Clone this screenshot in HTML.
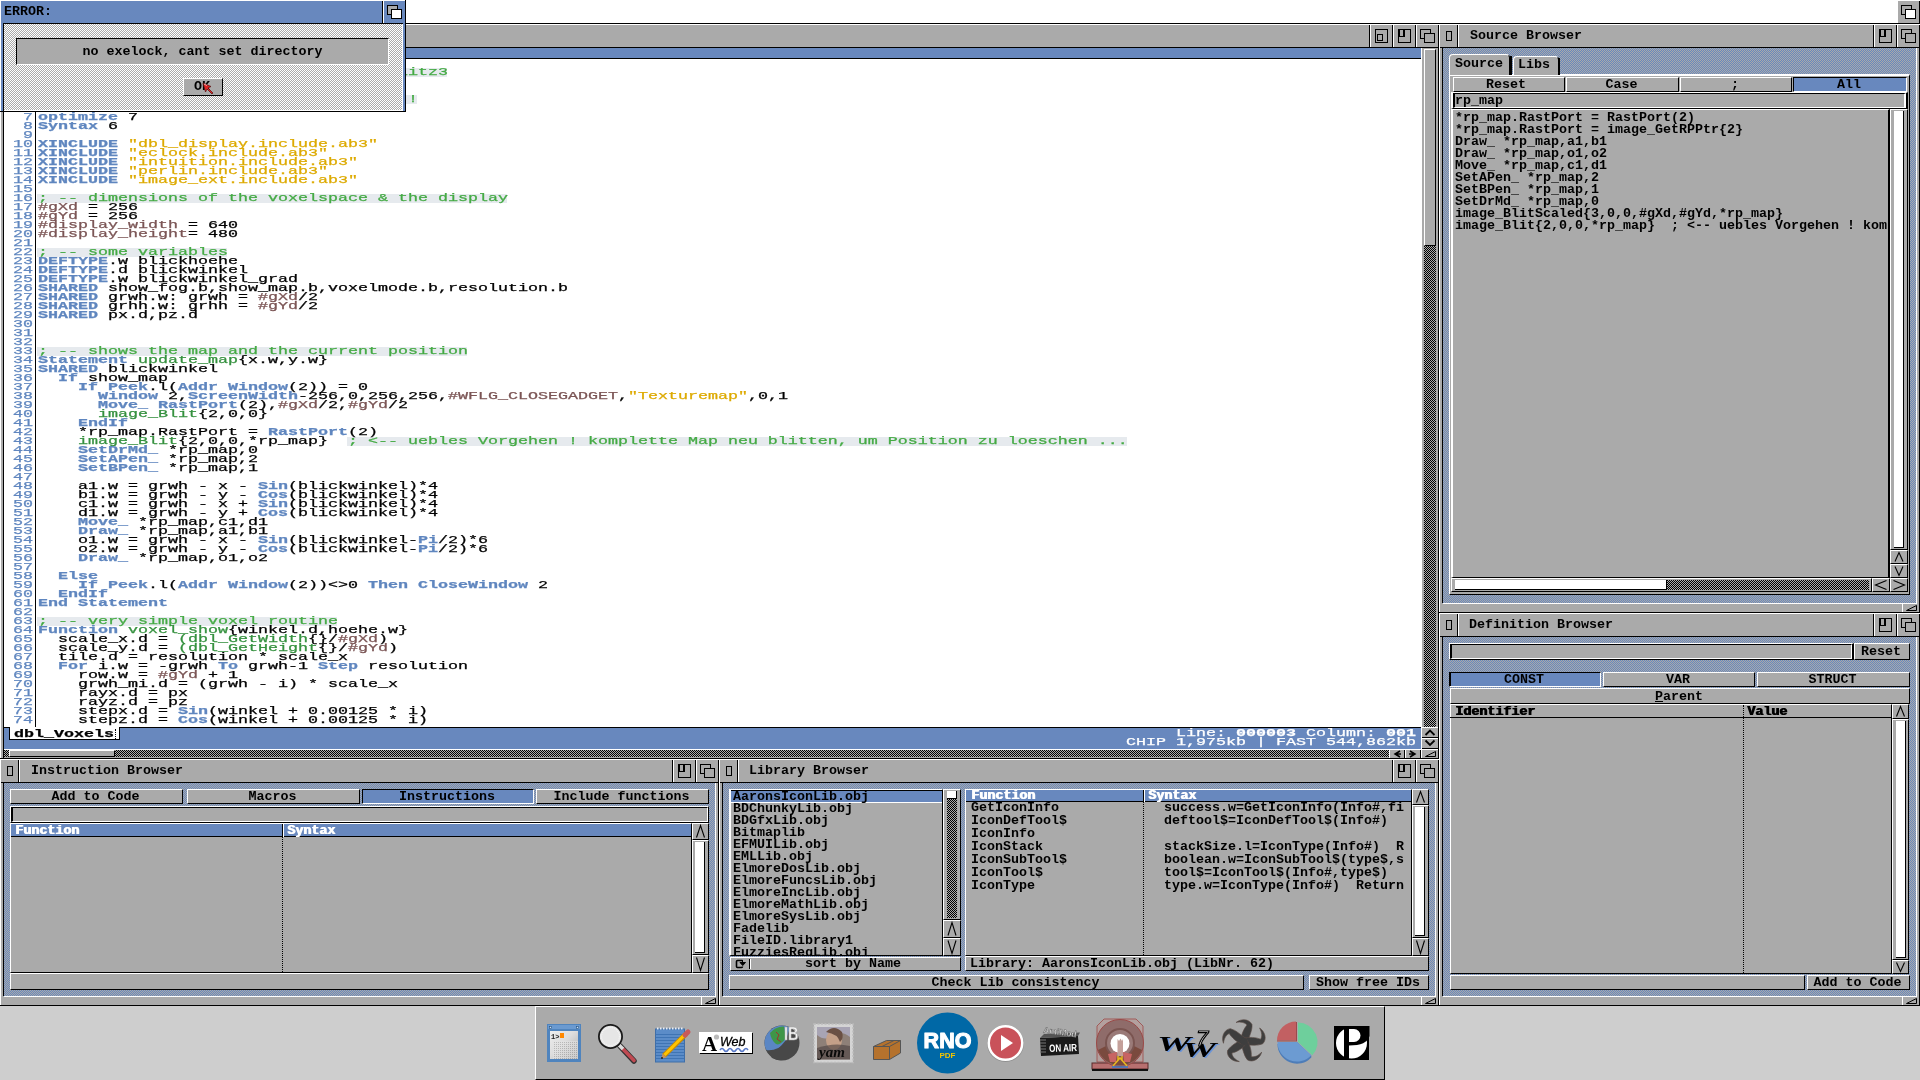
<!DOCTYPE html>
<html lang="en"><head><meta charset="utf-8"><title>AmiBlitz3</title>
<style>
html,body{margin:0;padding:0}
body{width:1920px;height:1080px;overflow:hidden;background:#cecece;position:relative;font-family:"Liberation Mono",monospace;font-size:13.333px;line-height:13px;color:#000}
div{box-sizing:border-box}
.a{position:absolute}
.t{white-space:pre;height:13px;font-weight:bold}
.g{background:#aaa}
.b{background:#6888be}
.k{background:#000}
.w{background:#fff}
.dz{background:repeating-conic-gradient(#aaa 0 25%,#6888be 0 50%) 0 0/2px 2px}
.dw{background:repeating-conic-gradient(#aaa 0 25%,#fff 0 50%) 0 0/2px 2px}
.dk{background:repeating-conic-gradient(#aaa 0 25%,#000 0 50%) 0 0/2px 2px}
.up{background:#aaa;border:1px solid;border-color:#fff #000 #000 #fff}
.dn{background:#aaa;border:1px solid;border-color:#000 #fff #fff #000}
.sel{background:#6888be;border:1px solid;border-color:#000 #fff #fff #000}
svg{position:absolute;overflow:visible}
.ed{-webkit-text-stroke:0.25px;font-size:10.63px;line-height:9px;white-space:pre;transform:scaleX(1.568);transform-origin:0 0;margin:0;font-family:"Liberation Mono",monospace}
.ed b{color:#5f86bf}
.ed i{font-style:normal;color:#35913f}
.ed u{text-decoration:none;color:#7b5555}
.ed s{text-decoration:none;color:#ddaa00}
.ed em{font-style:normal;color:#44aa44}
.hb{text-shadow:1px 0 0 currentColor}
#scr{position:absolute;left:0;top:0;width:1920px;height:1080px;will-change:transform}

</style></head>
<body>
<div id="scr">
<div class="a w" style="left:0px;top:0px;width:1920px;height:23px;"></div>
<div class="a" style="left:0px;top:23px;width:1920px;height:1px;background:#000"></div>
<div class="a g" style="left:1898px;top:1px;width:21px;height:22px;"></div>
<div class="a" style="left:1919px;top:1px;width:1px;height:22px;background:#000"></div>
<div class="a" style="left:1901px;top:5px;width:11px;height:10px;border:1px solid #000;background:#aaa"></div>
<div class="a" style="left:1905px;top:9px;width:11px;height:10px;border:1px solid #000;background:#fff"></div>
<div class="a g" style="left:0px;top:24px;width:1439px;height:735px;"></div>
<div class="a" style="left:0px;top:24px;width:1439px;height:1px;background:#fff"></div>
<div class="a" style="left:0px;top:24px;width:1px;height:735px;background:#fff"></div>
<div class="a" style="left:0px;top:758px;width:1439px;height:1px;background:#000"></div>
<div class="a" style="left:1438px;top:25px;width:1px;height:734px;background:#000"></div>
<div class="a" style="left:1px;top:47px;width:1438px;height:1px;background:#000"></div>
<div class="a" style="left:3px;top:48px;width:1px;height:710px;background:#000"></div>
<div class="a" style="left:1369px;top:25px;width:1px;height:22px;background:#000"></div>
<div class="a" style="left:1370px;top:25px;width:1px;height:22px;background:#fff"></div>
<div class="a" style="left:1375px;top:29px;width:13px;height:14px;border:1px solid #000;background:#aaa"></div>
<div class="a" style="left:1377px;top:34px;width:6px;height:7px;border:1px solid #000;background:#aaa"></div>
<div class="a" style="left:1392px;top:25px;width:1px;height:22px;background:#000"></div>
<div class="a" style="left:1393px;top:25px;width:1px;height:22px;background:#fff"></div>
<div class="a" style="left:1398px;top:29px;width:13px;height:14px;border:1px solid #000;background:#aaa"></div>
<div class="a" style="left:1398px;top:29px;width:7px;height:8px;border:solid #000;border-width:1px 2px 1px 2px;background:#aaa"></div>
<div class="a" style="left:1415px;top:25px;width:1px;height:22px;background:#000"></div>
<div class="a" style="left:1416px;top:25px;width:1px;height:22px;background:#fff"></div>
<div class="a" style="left:1420px;top:29px;width:11px;height:10px;border:1px solid #000;background:#aaa"></div>
<div class="a" style="left:1424px;top:33px;width:11px;height:10px;border:1px solid #000;background:#aaa"></div>
<div class="a b" style="left:4px;top:48px;width:1417px;height:10px;"></div>
<div class="a" style="left:4px;top:58px;width:1417px;height:1px;background:#000"></div>
<div class="a w" style="left:4px;top:59px;width:1418px;height:668px;"></div>
<div class="a" style="left:4px;top:727px;width:6px;height:1px;background:#000"></div>
<div class="a" style="left:119px;top:727px;width:1302px;height:1px;background:#000"></div>
<div class="a b" style="left:4px;top:728px;width:1417px;height:21px;"></div>
<div class="a" style="left:1421px;top:48px;width:1px;height:702px;background:#fff"></div>
<div class="a" style="left:1424px;top:49px;width:12px;height:197px;background:#aaa;border-left:1px solid #fff;border-top:1px solid #fff;border-right:1px solid #000;border-bottom:1px solid #000"></div>
<div class="a dk" style="left:1424px;top:246px;width:12px;height:481px;"></div>
<div class="a" style="left:1422px;top:727px;width:16px;height:1px;background:#fff"></div>
<div class="a" style="left:1422px;top:737px;width:16px;height:1px;background:#000"></div>
<div class="a" style="left:1422px;top:738px;width:16px;height:1px;background:#fff"></div>
<div class="a" style="left:1422px;top:748px;width:16px;height:1px;background:#000"></div>
<div class="a" style="left:1422px;top:749px;width:16px;height:1px;background:#fff"></div>
<svg style="left:1422px;top:728px" width="16" height="30"><path d="M3.5 7 L8 2.5 L12.5 7 M3.5 12.5 L8 17 L12.5 12.5" fill="none" stroke="#000" stroke-width="1.8"/><path d="M3.500 28.500 L13.500 23.500 L13.500 28.500 Z" fill="none" stroke="#000" stroke-width="1"/></svg>
<div class="a" style="left:4px;top:749px;width:1418px;height:1px;background:#fff"></div>
<div class="a dk" style="left:4px;top:750px;width:1385px;height:7px;"></div>
<div class="a up" style="left:9px;top:750px;width:106px;height:7px;"></div>
<div class="a" style="left:1389px;top:750px;width:1px;height:8px;background:#fff"></div>
<div class="a" style="left:1404px;top:750px;width:1px;height:8px;background:#000"></div>
<div class="a" style="left:1405px;top:750px;width:1px;height:8px;background:#fff"></div>
<div class="a" style="left:1420px;top:750px;width:1px;height:8px;background:#000"></div>
<div class="a" style="left:1421px;top:750px;width:1px;height:8px;background:#fff"></div>
<svg style="left:1390px;top:750px" width="30" height="8"><path d="M10 1 L5 4 L10 7 M5 4 L11 4 M20 1 L25 4 L20 7 M19 4 L25 4" fill="none" stroke="#000" stroke-width="1.5"/></svg>
<div class="a" style="left:9px;top:727px;width:111px;height:13px;background:#fff;border:1px solid #000;border-top:none"></div>
<div class="a" style="left:115px;top:729px;width:0;height:10px;border-left:1px dotted #000"></div>
<div class="a" style="left:35px;top:59px;width:1px;height:668px;background:#000"></div>
<div class="a" style="left:37px;top:68px;width:410px;height:9px;background:#e6eaee"></div><div class="a" style="left:37px;top:95px;width:380px;height:9px;background:#e6eaee"></div><div class="a" style="left:37px;top:194px;width:470px;height:9px;background:#e6eaee"></div><div class="a" style="left:37px;top:248px;width:190px;height:9px;background:#e6eaee"></div><div class="a" style="left:37px;top:347px;width:430px;height:9px;background:#e6eaee"></div><div class="a" style="left:347px;top:437px;width:780px;height:9px;background:#e6eaee"></div><div class="a" style="left:37px;top:617px;width:300px;height:9px;background:#e6eaee"></div>
<pre class="a ed" style="left:3px;top:59px;width:19.133px;text-align:right;color:#5f86bf">1
2
3
4
5
6
7
8
9
10
11
12
13
14
15
16
17
18
19
20
21
22
23
24
25
26
27
28
29
30
31
32
33
34
35
36
37
38
39
40
41
42
43
44
45
46
47
48
49
50
51
52
53
54
55
56
57
58
59
60
61
62
63
64
65
66
67
68
69
70
71
72
73
74</pre>
<pre class="a ed" style="left:37.500px;top:59px">

<em>; -- simple voxelspace demo for AmiBlitz3</em>


<em>; -- use cursor keys to move around  !</em>

<b>optimize</b> 7
<b>Syntax</b> 6

<b>XINCLUDE</b> <s>"dbl_display.include.ab3"</s>
<b>XINCLUDE</b> <s>"eclock.include.ab3"</s>
<b>XINCLUDE</b> <s>"intuition.include.ab3"</s>
<b>XINCLUDE</b> <s>"perlin.include.ab3"</s>
<b>XINCLUDE</b> <s>"image_ext.include.ab3"</s>

<em>; -- dimensions of the voxelspace &amp; the display</em>
<u>#gXd</u> = 256
<u>#gYd</u> = 256
<u>#display_width</u> = 640
<u>#display_height</u>= 480

<em>; -- some variables</em>
<b>DEFTYPE</b>.w blickhoehe
<b>DEFTYPE</b>.d blickwinkel
<b>DEFTYPE</b>.w blickwinkel_grad
<b>SHARED</b> show_fog.b,show_map.b,voxelmode.b,resolution.b
<b>SHARED</b> grwh.w: grwh = <u>#gXd</u>/2
<b>SHARED</b> grhh.w: grhh = <u>#gYd</u>/2
<b>SHARED</b> px.d,pz.d



<em>; -- shows the map and the current position</em>
<b>Statement</b> <i>update_map</i>{x.w,y.w}
<b>SHARED</b> blickwinkel
  <b>If</b> show_map
    <b>If</b> <b>Peek</b>.l(<b>Addr</b> <b>Window</b>(2)) = 0
      <b>Window</b> 2,<b>ScreenWidth</b>-256,0,256,256,<u>#WFLG_CLOSEGADGET</u>,<s>"Texturemap"</s>,0,1
      <b>Move_</b> <b>RastPort</b>(2),<u>#gXd</u>/2,<u>#gYd</u>/2
      <i>image_Blit</i>{2,0,0}
    <b>EndIf</b>
    *rp_map.RastPort = <b>RastPort</b>(2)
    <i>image_Blit</i>{2,0,0,*rp_map}  <em>; &lt;-- uebles Vorgehen ! komplette Map neu blitten, um Position zu loeschen ...</em>
    <b>SetDrMd_</b> *rp_map,0
    <b>SetAPen_</b> *rp_map,2
    <b>SetBPen_</b> *rp_map,1

    a1.w = grwh - x - <b>Sin</b>(blickwinkel)*4
    b1.w = grwh - y - <b>Cos</b>(blickwinkel)*4
    c1.w = grwh - x + <b>Sin</b>(blickwinkel)*4
    d1.w = grwh - y + <b>Cos</b>(blickwinkel)*4
    <b>Move_</b> *rp_map,c1,d1
    <b>Draw_</b> *rp_map,a1,b1
    o1.w = grwh - x - <b>Sin</b>(blickwinkel-<b>Pi</b>/2)*6
    o2.w = grwh - y - <b>Cos</b>(blickwinkel-<b>Pi</b>/2)*6
    <b>Draw_</b> *rp_map,o1,o2

  <b>Else</b>
    <b>If</b> <b>Peek</b>.l(<b>Addr</b> <b>Window</b>(2))&lt;&gt;0 <b>Then</b> <b>CloseWindow</b> 2
  <b>EndIf</b>
<b>End</b> <b>Statement</b>

<em>; -- very simple voxel routine</em>
<b>Function</b> <i>voxel_show</i>{winkel.d,hoehe.w}
  scale_x.d = <i>(dbl_GetWidth</i>{}/<u>#gXd</u>)
  scale_y.d = <i>(dbl_GetHeight</i>{}/<u>#gYd</u>)
  tile.d = resolution * scale_x
  <b>For</b> i.w = -grwh <b>To</b> grwh-1 <b>Step</b> resolution
    row.w = <u>#gYd</u> + 1
    grwh_mi.d = (grwh - i) * scale_x
    rayx.d = px
    rayz.d = pz
    stepx.d = <b>Sin</b>(winkel + 0.00125 * i)
    stepz.d = <b>Cos</b>(winkel + 0.00125 * i)</pre>
<pre class="a ed" style="left:14px;top:730px;font-weight:bold">dbl_Voxels</pre>
<pre class="a ed" style="left:1126px;top:729px;color:#fff;width:184.949px;text-align:right">Line: <b style="color:#fff">000003</b> Column: <b style="color:#fff">001</b>
CHIP 1,975kb | FAST 544,862kb</pre>
<div class="a g" style="left:1439px;top:24px;width:481px;height:589px;"></div>
<div class="a" style="left:1439px;top:24px;width:481px;height:1px;background:#fff"></div>
<div class="a" style="left:1439px;top:24px;width:1px;height:589px;background:#fff"></div>
<div class="a" style="left:1439px;top:612px;width:481px;height:1px;background:#000"></div>
<div class="a" style="left:1919px;top:25px;width:1px;height:588px;background:#000"></div>
<div class="a" style="left:1440px;top:47px;width:480px;height:1px;background:#000"></div>
<div class="a dz" style="left:1443px;top:48px;width:473px;height:555px;"></div>
<div class="a" style="left:1442px;top:48px;width:1px;height:555px;background:#000"></div>
<div class="a" style="left:1916px;top:48px;width:1px;height:555px;background:#fff"></div>
<div class="a" style="left:1443px;top:603px;width:474px;height:1px;background:#fff"></div>
<div class="a" style="left:1446px;top:31px;width:6px;height:10px;border:1px solid #000;background:#aaa"></div>
<div class="a" style="left:1457px;top:25px;width:1px;height:22px;background:#000"></div>
<div class="a" style="left:1458px;top:25px;width:1px;height:22px;background:#fff"></div>
<div class="a" style="left:1896px;top:25px;width:1px;height:22px;background:#000"></div>
<div class="a" style="left:1897px;top:25px;width:1px;height:22px;background:#fff"></div>
<div class="a" style="left:1901px;top:29px;width:11px;height:10px;border:1px solid #000;background:#aaa"></div>
<div class="a" style="left:1905px;top:33px;width:11px;height:10px;border:1px solid #000;background:#aaa"></div>
<div class="a" style="left:1873px;top:25px;width:1px;height:22px;background:#000"></div>
<div class="a" style="left:1874px;top:25px;width:1px;height:22px;background:#fff"></div>
<div class="a" style="left:1879px;top:29px;width:13px;height:14px;border:1px solid #000;background:#aaa"></div>
<div class="a" style="left:1879px;top:29px;width:7px;height:8px;border:solid #000;border-width:1px 2px 1px 2px;background:#aaa"></div>
<div class="a t" style="left:1470px;top:29px;">Source Browser</div>
<div class="a" style="left:1902px;top:604px;width:1px;height:8px;background:#fff"></div>
<svg style="left:1905px;top:604px" width="14" height="8"><path d="M1.5 6.500 L11.500 1.500 L11.500 6.500 Z" fill="none" stroke="#000" stroke-width="1"/></svg>
<div class="a g" style="left:1449px;top:74px;width:461px;height:521px;border:solid;border-width:2px 1px 1px 1px;border-color:#fff #000 #000 #fff"></div>
<div class="a g" style="left:1449px;top:54px;width:61px;height:21px;border:1px solid;border-color:#fff #000 #aaa #fff;border-radius:4px 4px 0 0;border-bottom:none"></div>
<div class="a k" style="left:1510px;top:56px;width:2px;height:19px;"></div>
<div class="a g" style="left:1513px;top:56px;width:46px;height:19px;border:1px solid;border-color:#fff #000 #aaa #fff;border-radius:4px 4px 0 0;border-bottom:none"></div>
<div class="a k" style="left:1558px;top:58px;width:2px;height:17px;"></div>
<div class="a t" style="left:1455px;top:57px;">Source</div>
<div class="a t" style="left:1518px;top:58px;">Libs</div>
<div class="a up" style="left:1453px;top:77px;width:112px;height:15px;"></div>
<div class="a t" style="left:1486px;top:78px;">Reset</div>
<div class="a up" style="left:1566px;top:77px;width:113px;height:15px;"></div>
<div class="a t" style="left:1565px;width:113px;text-align:center;top:78px;">Case</div>
<div class="a up" style="left:1680px;top:77px;width:112px;height:15px;"></div>
<div class="a t" style="left:1679px;width:112px;text-align:center;top:78px;">;</div>
<div class="a sel" style="left:1793px;top:77px;width:114px;height:15px;"></div>
<div class="a t" style="left:1792px;width:114px;text-align:center;top:78px;">All</div>
<div class="a g" style="left:1451px;top:92px;width:457px;height:17px;border:solid;border-width:1px 2px 1px 2px;border-color:#fff #000 #000 #fff"></div>
<div class="a g" style="left:1453px;top:93px;width:453px;height:15px;border:solid;border-width:1px 2px 1px 2px;border-color:#000 #fff #fff #000"></div>
<div class="a t" style="left:1455px;top:94px;">rp_map</div>
<div class="a g" style="left:1451px;top:109px;width:439px;height:469px;border:solid;border-width:1px 2px 1px 2px;border-color:#fff #000 #000 #fff"></div>
<div class="a t" style="left:1455px;top:111px;">*rp_map.RastPort = RastPort(2)</div>
<div class="a t" style="left:1455px;top:123px;">*rp_map.RastPort = image_GetRPPtr{2}</div>
<div class="a t" style="left:1455px;top:135px;">Draw_ *rp_map,a1,b1</div>
<div class="a t" style="left:1455px;top:147px;">Draw_ *rp_map,o1,o2</div>
<div class="a t" style="left:1455px;top:159px;">Move_ *rp_map,c1,d1</div>
<div class="a t" style="left:1455px;top:171px;">SetAPen_ *rp_map,2</div>
<div class="a t" style="left:1455px;top:183px;">SetBPen_ *rp_map,1</div>
<div class="a t" style="left:1455px;top:195px;">SetDrMd_ *rp_map,0</div>
<div class="a t" style="left:1455px;top:207px;">image_BlitScaled{3,0,0,#gXd,#gYd,*rp_map}</div>
<div class="a t" style="left:1455px;top:219px;">image_Blit{2,0,0,*rp_map}  ; &lt;-- uebles Vorgehen ! kom</div>
<div class="a g" style="left:1890px;top:109px;width:18px;height:441px;border:1px solid;border-color:#fff #000 #000 #fff"></div>
<div class="a dk" style="left:1894px;top:111px;width:10px;height:437px;"></div>
<div class="a w" style="left:1894px;top:111px;width:10px;height:437px;border-right:1px solid #000;border-bottom:1px solid #000"></div>
<div class="a up" style="left:1890px;top:550px;width:18px;height:14px;"></div>
<svg style="left:1890px;top:550px" width="18" height="14"><path d="M5.0 11.5 L9.0 2.5 L13.0 11.5" fill="none" stroke="#000" stroke-width="1.1"/></svg>
<div class="a up" style="left:1890px;top:564px;width:18px;height:14px;"></div>
<svg style="left:1890px;top:564px" width="18" height="14"><path d="M5.0 2.5 L9.0 11.5 L13.0 2.5" fill="none" stroke="#000" stroke-width="1.1"/></svg>
<div class="a g" style="left:1451px;top:578px;width:421px;height:14px;border:1px solid;border-color:#fff #000 #000 #fff"></div>
<div class="a dk" style="left:1455px;top:580px;width:414px;height:10px;"></div>
<div class="a w" style="left:1455px;top:580px;width:212px;height:10px;border-right:1px solid #000;border-bottom:1px solid #000"></div>
<div class="a up" style="left:1872px;top:578px;width:18px;height:14px;"></div>
<svg style="left:1872px;top:578px" width="18" height="14"><path d="M14.5 2.5 L3.5 7.0 L14.5 11.5" fill="none" stroke="#000" stroke-width="1.1"/></svg>
<div class="a up" style="left:1890px;top:578px;width:18px;height:14px;"></div>
<svg style="left:1890px;top:578px" width="18" height="14"><path d="M3.5 2.5 L14.5 7.0 L3.5 11.5" fill="none" stroke="#000" stroke-width="1.1"/></svg>
<div class="a g" style="left:1439px;top:613px;width:481px;height:393px;"></div>
<div class="a" style="left:1439px;top:613px;width:481px;height:1px;background:#fff"></div>
<div class="a" style="left:1439px;top:613px;width:1px;height:393px;background:#fff"></div>
<div class="a" style="left:1439px;top:1005px;width:481px;height:1px;background:#000"></div>
<div class="a" style="left:1919px;top:614px;width:1px;height:392px;background:#000"></div>
<div class="a" style="left:1440px;top:636px;width:480px;height:1px;background:#000"></div>
<div class="a dz" style="left:1443px;top:637px;width:473px;height:359px;"></div>
<div class="a" style="left:1442px;top:637px;width:1px;height:359px;background:#000"></div>
<div class="a" style="left:1916px;top:637px;width:1px;height:359px;background:#fff"></div>
<div class="a" style="left:1443px;top:996px;width:474px;height:1px;background:#fff"></div>
<div class="a" style="left:1446px;top:620px;width:6px;height:10px;border:1px solid #000;background:#aaa"></div>
<div class="a" style="left:1457px;top:614px;width:1px;height:22px;background:#000"></div>
<div class="a" style="left:1458px;top:614px;width:1px;height:22px;background:#fff"></div>
<div class="a" style="left:1896px;top:614px;width:1px;height:22px;background:#000"></div>
<div class="a" style="left:1897px;top:614px;width:1px;height:22px;background:#fff"></div>
<div class="a" style="left:1901px;top:618px;width:11px;height:10px;border:1px solid #000;background:#aaa"></div>
<div class="a" style="left:1905px;top:622px;width:11px;height:10px;border:1px solid #000;background:#aaa"></div>
<div class="a" style="left:1873px;top:614px;width:1px;height:22px;background:#000"></div>
<div class="a" style="left:1874px;top:614px;width:1px;height:22px;background:#fff"></div>
<div class="a" style="left:1879px;top:618px;width:13px;height:14px;border:1px solid #000;background:#aaa"></div>
<div class="a" style="left:1879px;top:618px;width:7px;height:8px;border:solid #000;border-width:1px 2px 1px 2px;background:#aaa"></div>
<div class="a t" style="left:1469px;top:618px;">Definition Browser</div>
<div class="a" style="left:1902px;top:997px;width:1px;height:8px;background:#fff"></div>
<svg style="left:1905px;top:997px" width="14" height="8"><path d="M1.5 6.500 L11.500 1.500 L11.500 6.500 Z" fill="none" stroke="#000" stroke-width="1"/></svg>
<div class="a g" style="left:1449px;top:643px;width:405px;height:17px;border:solid;border-width:1px 2px 1px 1px;border-color:#fff #000 #000 #fff"></div>
<div class="a g" style="left:1450px;top:644px;width:402px;height:15px;border:1px solid;border-color:#000 #fff #fff #000;border-left-width:2px"></div>
<div class="a up" style="left:1854px;top:643px;width:56px;height:17px;"></div>
<div class="a t" style="left:1853px;width:56px;text-align:center;top:645px;">Reset</div>
<div class="a sel" style="left:1449px;top:672px;width:152px;height:15px;"></div>
<div class="a t" style="left:1448px;width:152px;text-align:center;top:673px;">CONST</div>
<div class="a" style="left:1450px;top:673px;width:1px;height:13px;background:#000"></div>
<div class="a up" style="left:1603px;top:672px;width:152px;height:15px;"></div>
<div class="a t" style="left:1602px;width:152px;text-align:center;top:673px;">VAR</div>
<div class="a up" style="left:1757px;top:672px;width:153px;height:15px;"></div>
<div class="a t" style="left:1756px;width:153px;text-align:center;top:673px;">STRUCT</div>
<div class="a up" style="left:1450px;top:688px;width:460px;height:16px;"></div>
<div class="a t" style="left:1449px;width:460px;text-align:center;top:690px;">Parent</div>
<div class="a" style="left:1655px;top:701px;width:8px;height:1px;background:#000"></div>
<div class="a g" style="left:1450px;top:704px;width:442px;height:270px;border:1px solid;border-color:#fff #000 #000 #fff"></div>
<div class="a" style="left:1450px;top:717px;width:442px;height:1px;background:#000"></div>
<div class="a t hb" style="left:1455px;top:705px;">Identifier</div>
<div class="a t hb" style="left:1747px;top:705px;">Value</div>
<div class="a" style="left:1743px;top:705px;width:0;height:268px;border-left:1px dotted #000"></div>
<div class="a up" style="left:1892px;top:704px;width:17px;height:15px;"></div>
<svg style="left:1892px;top:704px" width="17" height="15"><path d="M4.5 12.5 L8.5 2.5 L12.5 12.5" fill="none" stroke="#000" stroke-width="1.1"/></svg>
<div class="a g" style="left:1892px;top:719px;width:17px;height:241px;border:1px solid;border-color:#fff #000 #000 #fff"></div>
<div class="a dk" style="left:1896px;top:721px;width:10px;height:237px;"></div>
<div class="a w" style="left:1896px;top:721px;width:10px;height:237px;border-right:1px solid #000;border-bottom:1px solid #000"></div>
<div class="a up" style="left:1892px;top:960px;width:17px;height:14px;"></div>
<svg style="left:1892px;top:960px" width="17" height="14"><path d="M4.5 2.5 L8.5 11.5 L12.5 2.5" fill="none" stroke="#000" stroke-width="1.1"/></svg>
<div class="a up" style="left:1450px;top:975px;width:355px;height:15px;"></div>
<div class="a up" style="left:1807px;top:975px;width:103px;height:15px;"></div>
<div class="a t" style="left:1806px;width:103px;text-align:center;top:976px;">Add to Code</div>
<div class="a g" style="left:0px;top:759px;width:719px;height:247px;"></div>
<div class="a" style="left:0px;top:759px;width:719px;height:1px;background:#fff"></div>
<div class="a" style="left:0px;top:759px;width:1px;height:247px;background:#fff"></div>
<div class="a" style="left:0px;top:1005px;width:719px;height:1px;background:#000"></div>
<div class="a" style="left:718px;top:760px;width:1px;height:246px;background:#000"></div>
<div class="a" style="left:1px;top:782px;width:718px;height:1px;background:#000"></div>
<div class="a dz" style="left:4px;top:783px;width:711px;height:213px;"></div>
<div class="a" style="left:3px;top:783px;width:1px;height:213px;background:#000"></div>
<div class="a" style="left:715px;top:783px;width:1px;height:213px;background:#fff"></div>
<div class="a" style="left:4px;top:996px;width:712px;height:1px;background:#fff"></div>
<div class="a" style="left:7px;top:766px;width:6px;height:10px;border:1px solid #000;background:#aaa"></div>
<div class="a" style="left:18px;top:760px;width:1px;height:22px;background:#000"></div>
<div class="a" style="left:19px;top:760px;width:1px;height:22px;background:#fff"></div>
<div class="a" style="left:695px;top:760px;width:1px;height:22px;background:#000"></div>
<div class="a" style="left:696px;top:760px;width:1px;height:22px;background:#fff"></div>
<div class="a" style="left:700px;top:764px;width:11px;height:10px;border:1px solid #000;background:#aaa"></div>
<div class="a" style="left:704px;top:768px;width:11px;height:10px;border:1px solid #000;background:#aaa"></div>
<div class="a" style="left:672px;top:760px;width:1px;height:22px;background:#000"></div>
<div class="a" style="left:673px;top:760px;width:1px;height:22px;background:#fff"></div>
<div class="a" style="left:678px;top:764px;width:13px;height:14px;border:1px solid #000;background:#aaa"></div>
<div class="a" style="left:678px;top:764px;width:7px;height:8px;border:solid #000;border-width:1px 2px 1px 2px;background:#aaa"></div>
<div class="a t" style="left:31px;top:764px;">Instruction Browser</div>
<div class="a" style="left:701px;top:997px;width:1px;height:8px;background:#fff"></div>
<svg style="left:704px;top:997px" width="14" height="8"><path d="M1.5 6.500 L11.500 1.500 L11.500 6.500 Z" fill="none" stroke="#000" stroke-width="1"/></svg>
<div class="a up" style="left:10px;top:789px;width:173px;height:15px;"></div>
<div class="a t" style="left:9px;width:173px;text-align:center;top:790px;">Add to Code</div>
<div class="a up" style="left:187px;top:789px;width:173px;height:15px;"></div>
<div class="a t" style="left:186px;width:173px;text-align:center;top:790px;">Macros</div>
<div class="a sel" style="left:362px;top:789px;width:172px;height:15px;"></div>
<div class="a t" style="left:361px;width:172px;text-align:center;top:790px;">Instructions</div>
<div class="a up" style="left:536px;top:789px;width:173px;height:15px;"></div>
<div class="a t" style="left:535px;width:173px;text-align:center;top:790px;">Include functions</div>
<div class="a g" style="left:10px;top:806px;width:699px;height:17px;border:1px solid;border-color:#fff #000 #000 #fff"></div>
<div class="a g" style="left:11px;top:807px;width:697px;height:15px;border:1px solid;border-color:#000 #fff #fff #000;border-left-width:2px"></div>
<div class="a g" style="left:10px;top:823px;width:682px;height:150px;border:1px solid;border-color:#fff #000 #000 #fff"></div>
<div class="a b" style="left:11px;top:824px;width:680px;height:12px;"></div>
<div class="a" style="left:11px;top:836px;width:680px;height:1px;background:#000"></div>
<div class="a" style="left:282px;top:824px;width:1px;height:13px;background:#000"></div>
<div class="a" style="left:283px;top:824px;width:1px;height:13px;background:#fff"></div>
<div class="a t hb" style="left:15px;top:824px;color:#fff">Function</div>
<div class="a t hb" style="left:287px;top:824px;color:#fff">Syntax</div>
<div class="a" style="left:282px;top:837px;width:0;height:135px;border-left:1px dotted #000"></div>
<div class="a up" style="left:692px;top:823px;width:17px;height:17px;"></div>
<svg style="left:692px;top:823px" width="17" height="17"><path d="M4.5 14.5 L8.5 2.5 L12.5 14.5" fill="none" stroke="#000" stroke-width="1.1"/></svg>
<div class="a g" style="left:692px;top:840px;width:17px;height:115px;border:1px solid;border-color:#fff #000 #000 #fff"></div>
<div class="a dk" style="left:695px;top:842px;width:10px;height:111px;"></div>
<div class="a w" style="left:695px;top:842px;width:10px;height:111px;border-right:1px solid #000;border-bottom:1px solid #000"></div>
<div class="a up" style="left:692px;top:955px;width:17px;height:18px;"></div>
<svg style="left:692px;top:955px" width="17" height="18"><path d="M4.5 2.5 L8.5 15.5 L12.5 2.5" fill="none" stroke="#000" stroke-width="1.1"/></svg>
<div class="a up" style="left:10px;top:973px;width:699px;height:17px;"></div>
<div class="a g" style="left:719px;top:759px;width:720px;height:247px;"></div>
<div class="a" style="left:719px;top:759px;width:720px;height:1px;background:#fff"></div>
<div class="a" style="left:719px;top:759px;width:1px;height:247px;background:#fff"></div>
<div class="a" style="left:719px;top:1005px;width:720px;height:1px;background:#000"></div>
<div class="a" style="left:1438px;top:760px;width:1px;height:246px;background:#000"></div>
<div class="a" style="left:720px;top:782px;width:719px;height:1px;background:#000"></div>
<div class="a dz" style="left:723px;top:783px;width:712px;height:213px;"></div>
<div class="a" style="left:722px;top:783px;width:1px;height:213px;background:#000"></div>
<div class="a" style="left:1435px;top:783px;width:1px;height:213px;background:#fff"></div>
<div class="a" style="left:723px;top:996px;width:713px;height:1px;background:#fff"></div>
<div class="a" style="left:726px;top:766px;width:6px;height:10px;border:1px solid #000;background:#aaa"></div>
<div class="a" style="left:737px;top:760px;width:1px;height:22px;background:#000"></div>
<div class="a" style="left:738px;top:760px;width:1px;height:22px;background:#fff"></div>
<div class="a" style="left:1415px;top:760px;width:1px;height:22px;background:#000"></div>
<div class="a" style="left:1416px;top:760px;width:1px;height:22px;background:#fff"></div>
<div class="a" style="left:1420px;top:764px;width:11px;height:10px;border:1px solid #000;background:#aaa"></div>
<div class="a" style="left:1424px;top:768px;width:11px;height:10px;border:1px solid #000;background:#aaa"></div>
<div class="a" style="left:1392px;top:760px;width:1px;height:22px;background:#000"></div>
<div class="a" style="left:1393px;top:760px;width:1px;height:22px;background:#fff"></div>
<div class="a" style="left:1398px;top:764px;width:13px;height:14px;border:1px solid #000;background:#aaa"></div>
<div class="a" style="left:1398px;top:764px;width:7px;height:8px;border:solid #000;border-width:1px 2px 1px 2px;background:#aaa"></div>
<div class="a t" style="left:749px;top:764px;">Library Browser</div>
<div class="a" style="left:1421px;top:997px;width:1px;height:8px;background:#fff"></div>
<svg style="left:1424px;top:997px" width="14" height="8"><path d="M1.5 6.500 L11.500 1.500 L11.500 6.500 Z" fill="none" stroke="#000" stroke-width="1"/></svg>
<div class="a g" style="left:729px;top:789px;width:214px;height:167px;border:solid;border-width:1px 1px 1px 2px;border-color:#fff #000 #000 #fff"></div>
<div class="a" style="left:731px;top:790px;width:211px;height:1px;background:#000"></div>
<div class="a b" style="left:731px;top:791px;width:211px;height:11px;"></div>
<div class="a" style="left:731px;top:802px;width:211px;height:1px;background:#fff"></div>
<div class="a" style="left:729px;top:789px;width:214px;height:166px;overflow:hidden"><div class="a t" style="left:4px;top:1px;">AaronsIconLib.obj</div><div class="a t" style="left:4px;top:13px;">BDChunkyLib.obj</div><div class="a t" style="left:4px;top:25px;">BDGfxLib.obj</div><div class="a t" style="left:4px;top:37px;">Bitmaplib</div><div class="a t" style="left:4px;top:49px;">EFMUILib.obj</div><div class="a t" style="left:4px;top:61px;">EMLLib.obj</div><div class="a t" style="left:4px;top:73px;">ElmoreDosLib.obj</div><div class="a t" style="left:4px;top:85px;">ElmoreFuncsLib.obj</div><div class="a t" style="left:4px;top:97px;">ElmoreIncLib.obj</div><div class="a t" style="left:4px;top:109px;">ElmoreMathLib.obj</div><div class="a t" style="left:4px;top:121px;">ElmoreSysLib.obj</div><div class="a t" style="left:4px;top:133px;">Fadelib</div><div class="a t" style="left:4px;top:145px;">FileID.library1</div><div class="a t" style="left:4px;top:157px;">FuzziesRegLib.obj</div></div>
<div class="a g" style="left:943px;top:789px;width:18px;height:131px;border:1px solid;border-color:#fff #000 #000 #fff"></div>
<div class="a dk" style="left:947px;top:791px;width:10px;height:127px;"></div>
<div class="a w" style="left:947px;top:791px;width:10px;height:8px;border-right:1px solid #000;border-bottom:1px solid #000"></div>
<div class="a up" style="left:943px;top:920px;width:18px;height:18px;"></div>
<svg style="left:943px;top:920px" width="18" height="18"><path d="M5.0 15.5 L9.0 2.5 L13.0 15.5" fill="none" stroke="#000" stroke-width="1.1"/></svg>
<div class="a up" style="left:943px;top:938px;width:18px;height:18px;"></div>
<svg style="left:943px;top:938px" width="18" height="18"><path d="M5.0 2.5 L9.0 15.5 L13.0 2.5" fill="none" stroke="#000" stroke-width="1.1"/></svg>
<div class="a up" style="left:730px;top:957px;width:231px;height:14px;"></div>
<div class="a" style="left:749px;top:959px;width:1px;height:10px;background:#000"></div>
<div class="a" style="left:750px;top:959px;width:1px;height:10px;background:#fff"></div>
<svg style="left:734px;top:958px" width="14" height="12"><path d="M8.5 2.5 H3.5 Q2.5 2.5 2.5 3.5 V8.5 Q2.5 9.5 3.5 9.5 H7.5 Q8.5 9.5 8.5 8.5" fill="none" stroke="#000" stroke-width="1.6"/><path d="M8.5 2 V5 M6 4.5 H11.5 L8.75 7.5 Z" fill="#000" stroke="#000" stroke-width="1"/></svg>
<div class="a t" style="left:748px;width:210px;text-align:center;top:957px;">sort by Name</div>
<div class="a g" style="left:965px;top:789px;width:447px;height:167px;border:1px solid;border-color:#fff #000 #000 #fff"></div>
<div class="a b" style="left:966px;top:790px;width:445px;height:11px;"></div>
<div class="a" style="left:966px;top:801px;width:445px;height:1px;background:#000"></div>
<div class="a" style="left:1143px;top:790px;width:1px;height:12px;background:#000"></div>
<div class="a" style="left:1144px;top:790px;width:1px;height:12px;background:#fff"></div>
<div class="a t hb" style="left:971px;top:789px;color:#fff">Function</div>
<div class="a t hb" style="left:1148px;top:789px;color:#fff">Syntax</div>
<div class="a" style="left:1143px;top:802px;width:0;height:153px;border-left:1px dotted #000"></div>
<div class="a t" style="left:971px;top:801px;">GetIconInfo</div>
<div class="a t" style="left:1148px;top:801px;">  success.w=GetIconInfo(Info#,fi</div>
<div class="a t" style="left:971px;top:814px;">IconDefTool$</div>
<div class="a t" style="left:1148px;top:814px;">  deftool$=IconDefTool$(Info#)</div>
<div class="a t" style="left:971px;top:827px;">IconInfo</div>
<div class="a t" style="left:1148px;top:827px;"></div>
<div class="a t" style="left:971px;top:840px;">IconStack</div>
<div class="a t" style="left:1148px;top:840px;">  stackSize.l=IconType(Info#)  R</div>
<div class="a t" style="left:971px;top:853px;">IconSubTool$</div>
<div class="a t" style="left:1148px;top:853px;">  boolean.w=IconSubTool$(type$,s</div>
<div class="a t" style="left:971px;top:866px;">IconTool$</div>
<div class="a t" style="left:1148px;top:866px;">  tool$=IconTool$(Info#,type$)</div>
<div class="a t" style="left:971px;top:879px;">IconType</div>
<div class="a t" style="left:1148px;top:879px;">  type.w=IconType(Info#)  Return</div>
<div class="a up" style="left:1412px;top:789px;width:17px;height:16px;"></div>
<svg style="left:1412px;top:789px" width="17" height="16"><path d="M4.5 13.5 L8.5 2.5 L12.5 13.5" fill="none" stroke="#000" stroke-width="1.1"/></svg>
<div class="a g" style="left:1412px;top:805px;width:17px;height:133px;border:1px solid;border-color:#fff #000 #000 #fff"></div>
<div class="a dk" style="left:1415px;top:807px;width:10px;height:129px;"></div>
<div class="a w" style="left:1415px;top:807px;width:10px;height:129px;border-right:1px solid #000;border-bottom:1px solid #000"></div>
<div class="a up" style="left:1412px;top:938px;width:17px;height:18px;"></div>
<svg style="left:1412px;top:938px" width="17" height="18"><path d="M4.5 2.5 L8.5 15.5 L12.5 2.5" fill="none" stroke="#000" stroke-width="1.1"/></svg>
<div class="a up" style="left:965px;top:956px;width:464px;height:15px;"></div>
<div class="a t" style="left:970px;top:957px;">Library: AaronsIconLib.obj (LibNr. 62)</div>
<div class="a up" style="left:729px;top:975px;width:575px;height:15px;"></div>
<div class="a t" style="left:728px;width:575px;text-align:center;top:976px;">Check Lib consistency</div>
<div class="a up" style="left:1309px;top:975px;width:120px;height:15px;"></div>
<div class="a t" style="left:1308px;width:120px;text-align:center;top:976px;">Show free IDs</div>
<div class="a g" style="left:535px;top:1006px;width:850px;height:74px;border:1px solid;border-color:#fff #000 #000 #fff"></div>
<svg style="left:535px;top:1007px" width="850" height="73" viewBox="535 1007 850 73" font-family="Liberation Sans, sans-serif">
<defs>
<pattern id="dots" width="2" height="2" patternUnits="userSpaceOnUse"><rect width="2" height="2" fill="#e4e4e4"/><rect width="1" height="1" fill="#9a9a9a"/></pattern>
<linearGradient id="shg" x1="0" y1="0" x2="1" y2="1"><stop offset="0" stop-color="#eee"/><stop offset="0.45" stop-color="#ddd"/><stop offset="1" stop-color="#aaa"/></linearGradient>
<radialGradient id="glb" cx="0.35" cy="0.3" r="0.8"><stop offset="0" stop-color="#5a8ad0"/><stop offset="0.4" stop-color="#4a6a8a"/><stop offset="0.6" stop-color="#484848"/><stop offset="1" stop-color="#3a3a3a"/></radialGradient>
</defs>
<!-- shell -->
<rect x="547" y="1024" width="34" height="38" fill="#4f84be"/>
<rect x="548" y="1025" width="32" height="4" fill="#6b9ad0"/>
<rect x="550" y="1031" width="28" height="28" fill="url(#shg)"/>
<rect x="553" y="1041" width="25" height="18" fill="url(#dots)" opacity="0.55"/>
<rect x="549.5" y="1026.500" width="2" height="2" fill="#cfe0f4" stroke="#24507e" stroke-width="0.6"/><rect x="576.5" y="1026.5" width="2" height="2" fill="#cfe0f4" stroke="#24507e" stroke-width="0.6"/>
<text x="551" y="1038.500" font-family="Liberation Mono, monospace" font-size="7" font-weight="bold" fill="#222">1&gt;</text>
<rect x="560" y="1033" width="4" height="5" fill="#ff8800"/>
<!-- magnifier -->
<line x1="620" y1="1046" x2="634" y2="1061" stroke="#333" stroke-width="5.5" stroke-linecap="round"/>
<line x1="623" y1="1049" x2="634" y2="1060.500" stroke="#c04a52" stroke-width="3.6" stroke-linecap="round"/>
<line x1="619" y1="1045" x2="623" y2="1049" stroke="#ddd" stroke-width="3.6"/>
<circle cx="610.5" cy="1036.500" r="11.6" fill="#e6e6e6" stroke="#1a1a1a" stroke-width="1.8"/>
<circle cx="610.5" cy="1036.500" r="9" fill="none" stroke="#f6f6f6" stroke-width="1.2" stroke-dasharray="1 1"/>
<!-- notepad -->
<rect x="655.5" y="1029" width="29" height="33" fill="#5b8cc8" stroke="#3f6ea8" stroke-width="1"/>
<g stroke="#3f74b4" stroke-width="1"><line x1="656" y1="1034.500" x2="684" y2="1034.500"/><line x1="656" y1="1037.500" x2="684" y2="1037.500"/><line x1="656" y1="1040.500" x2="684" y2="1040.500"/><line x1="656" y1="1043.500" x2="684" y2="1043.500"/><line x1="656" y1="1046.500" x2="684" y2="1046.500"/><line x1="656" y1="1049.500" x2="684" y2="1049.500"/><line x1="656" y1="1052.500" x2="684" y2="1052.500"/><line x1="656" y1="1055.500" x2="684" y2="1055.500"/><line x1="656" y1="1058.500" x2="684" y2="1058.500"/></g>
<line x1="657" y1="1028.500" x2="684" y2="1028.500" stroke="#e8eef8" stroke-width="2" stroke-dasharray="1.5 1.5"/>
<line x1="664" y1="1055.500" x2="686" y2="1034" stroke="#c98a00" stroke-width="5" />
<line x1="664.500" y1="1055" x2="686" y2="1033.500" stroke="#ffc400" stroke-width="3"/>
<line x1="685" y1="1035" x2="688" y2="1032" stroke="#c85a5a" stroke-width="5" stroke-linecap="round"/>
<path d="M661.5 1058.500 L662.5 1053.500 L666.5 1057.500 Z" fill="#c8935a"/><circle cx="662" cy="1058" r="1" fill="#222"/>
<!-- AWeb -->
<rect x="700" y="1033" width="53" height="21" fill="#000"/>
<rect x="699" y="1032" width="53" height="21" fill="#fff"/>
<text x="702" y="1050.500" font-family="Liberation Serif, serif" font-weight="bold" font-size="21" fill="#000">A</text>
<circle cx="716.500" cy="1037" r="2.6" fill="#bbb"/>
<text x="720" y="1046" font-family="Liberation Sans, sans-serif" font-style="italic" font-size="12.500" fill="#000" stroke="#000" stroke-width="0.300">Web</text>
<path d="M720 1050 q2 -3 4 0 t4 0 t4 0 t4 0 t4 0 t4 0 t4 0" fill="none" stroke="#5a7ac8" stroke-width="1.6"/>
<!-- IB globe -->
<circle cx="782" cy="1043" r="17.500" fill="#484848"/>
<path d="M764.800 1046 A17.500 17.500 0 0 1 790 1027.500 L786 1040 Q778 1050 772 1054 Q766 1052 764.800 1046 Z" fill="#5a86c4"/>
<path d="M770 1033 Q776 1026 784 1026.500 L786 1038 Q780 1046 776 1044 Q771 1040 770 1033 Z" fill="#3f9648"/>
<path d="M776 1032 l3 3 l-2 4 l4 3" stroke="#a03030" stroke-width="1" fill="none"/>
<path d="M766 1050 Q776 1052 790 1040 L797 1036 Q800 1046 794 1054 Q784 1064 772 1058 Z" fill="#484848"/>
<text x="784" y="1039.500" font-family="Liberation Sans, sans-serif" font-weight="bold" font-size="17.500" fill="#f4f4f4" stroke="#a0a0a0" stroke-width="0.600" textLength="14.500" lengthAdjust="spacingAndGlyphs">IB</text>
<!-- YAM -->
<rect x="814" y="1024" width="39" height="38.500" fill="#d4d4d4" stroke="#bdbdbd" stroke-dasharray="2 1.500" stroke-width="1.500"/>
<rect x="817" y="1027" width="33" height="32.500" fill="#8e8078"/>
<path d="M817 1027 h33 v10 q-10 -8 -18 0 q-8 4 -15 -2z" fill="#a8a4b4"/>
<ellipse cx="834" cy="1040" rx="8" ry="10" fill="#c4a088"/>
<path d="M826 1032 q8 -8 16 0 q2 6 -2 10 q-2 -8 -14 -10z" fill="#6a5044"/>
<path d="M817 1048 Q834 1042 850 1046 V1059.500 H817 Z" fill="#4a4040" opacity="0.600"/>
<text x="819" y="1057" font-family="Liberation Serif, serif" font-style="italic" font-weight="bold" font-size="15" fill="#0a0a0a">yam</text>
<!-- box -->
<path d="M873.500 1046.500 L886.500 1040.500 L900.500 1040.500 L900.500 1053 L889.500 1059.500 L873.500 1059.500 Z" fill="#b5722d" stroke="#555" stroke-width="1"/>
<path d="M873.500 1046.500 L889.500 1046.500 L900.500 1040.500 M889.500 1046.500 L889.500 1059.500" fill="none" stroke="#555" stroke-width="1"/>
<path d="M882 1046.500 L894 1040.500" stroke="#555" stroke-width="1"/>
<!-- RNO -->
<circle cx="947.5" cy="1043" r="30.500" fill="#0068a6"/>
<text x="947.5" y="1048" text-anchor="middle" font-weight="bold" font-size="21.500" fill="#fff" stroke="#fff" stroke-width="1.1" stroke-linejoin="round">RNO</text>
<text x="947.5" y="1058" text-anchor="middle" font-weight="bold" font-size="8" fill="#f2c400">PDF</text>
<!-- play -->
<circle cx="1005.5" cy="1043.500" r="18.500" fill="#8f8f8f"/>
<circle cx="1005.5" cy="1043" r="18" fill="#fff"/>
<circle cx="1005.5" cy="1043" r="15.500" fill="#c9525a"/>
<path d="M1001 1035 L1013 1043 L1001 1051 Z" fill="#fff"/>
<!-- AmiMod on air -->
<path d="M1040 1038 L1078 1036 L1079 1054 L1041 1056 Z" fill="#1a1a1a"/>
<path d="M1040 1038 L1044 1034 L1080 1032.500 L1078 1036 Z" fill="#555"/>
<path d="M1040 1040 L1046 1040 M1040 1043 L1046 1043 M1040 1046 L1046 1046 M1040 1049 L1046 1049 M1040 1052 L1046 1052" stroke="#777" stroke-width="1"/>
<text x="1063" y="1051.500" text-anchor="middle" font-weight="bold" font-size="10.500" fill="#fff" transform="rotate(-2 1063 1048)" textLength="28" lengthAdjust="spacingAndGlyphs">ON AIR</text>
<text x="1060" y="1035" text-anchor="middle" font-weight="bold" font-size="8.500" fill="#eee" stroke="#666" stroke-width="0.500" transform="rotate(8 1060 1032)">AmiMod</text>
<!-- speaker -->
<path d="M1097 1026 L1104 1019 H1136 L1143 1026 V1062 H1097 Z" fill="#b3a09e" stroke="#a05a58" stroke-width="1"/>
<rect x="1092" y="1063" width="56" height="6" fill="#b87070" stroke="#5a2a2a" stroke-width="1"/>
<rect x="1092" y="1069" width="56" height="2" fill="#111"/>
<circle cx="1120" cy="1043" r="23.500" fill="#8f6c6a" stroke="#9a4a48" stroke-width="1"/>
<path d="M1098 1050 A23.500 23.500 0 0 0 1142 1050 L1134 1046 Q1120 1066 1106 1046 Z" fill="#7a4a3e"/>
<circle cx="1120" cy="1043" r="14" fill="#9a7a78" stroke="#7a5450" stroke-width="2"/>
<circle cx="1120" cy="1043.500" r="9.500" fill="#fff"/>
<path d="M1117.500 1039 L1119 1041 L1120.500 1038.500 L1122 1041 L1123 1039 L1123 1056 L1117.500 1056 Z" fill="#c4a09a"/>
<path d="M1108 1054 L1117 1052 L1116 1062 L1110 1062 Z M1132 1054 L1123 1052 L1124 1062 L1130 1062 Z" fill="#c86464"/>
<path d="M1113 1066 L1120 1058 L1127 1066 M1118 1056 L1118 1060 M1122 1056 L1122 1060" stroke="#e8b820" stroke-width="1.500" fill="none"/>
<path d="M1112 1067 L1128 1067" stroke="#3a7ac8" stroke-width="1.500"/>
<!-- WW7 -->
<g font-family="Liberation Serif, serif" font-weight="bold" font-style="italic">
<text x="1158.500" y="1052" font-size="21" fill="#6a94d8" textLength="34" lengthAdjust="spacingAndGlyphs">W</text>
<text x="1183.500" y="1058" font-size="21" fill="#6a94d8" textLength="34" lengthAdjust="spacingAndGlyphs">W</text>
<text x="1157" y="1050.500" font-size="21" fill="#000" textLength="34" lengthAdjust="spacingAndGlyphs">W</text>
<text x="1182" y="1056.500" font-size="21" fill="#000" textLength="34" lengthAdjust="spacingAndGlyphs">W</text>
<text x="1196" y="1046" font-size="22" fill="#fff" stroke="#000" stroke-width="1.200" font-weight="normal" font-family="Liberation Sans, sans-serif">7</text>
</g>
<!-- star -->
<g transform="translate(1244 1041.500)" fill="#3e3e3e" stroke="#5a4a44" stroke-width="0.600"><path d="M-3.500 1 C-3 -7 0 -13 3 -16.500 C1 -19 -3 -20 -8 -19 C-3 -23 5 -23 8 -17 C8.500 -11 5 -5 3.500 1 Z" transform="rotate(0)"/><path d="M-3.500 1 C-3 -7 0 -13 3 -16.500 C1 -19 -3 -20 -8 -19 C-3 -23 5 -23 8 -17 C8.500 -11 5 -5 3.500 1 Z" transform="rotate(72)"/><path d="M-3.500 1 C-3 -7 0 -13 3 -16.500 C1 -19 -3 -20 -8 -19 C-3 -23 5 -23 8 -17 C8.500 -11 5 -5 3.500 1 Z" transform="rotate(144)"/><path d="M-3.500 1 C-3 -7 0 -13 3 -16.500 C1 -19 -3 -20 -8 -19 C-3 -23 5 -23 8 -17 C8.500 -11 5 -5 3.500 1 Z" transform="rotate(216)"/><path d="M-3.500 1 C-3 -7 0 -13 3 -16.500 C1 -19 -3 -20 -8 -19 C-3 -23 5 -23 8 -17 C8.500 -11 5 -5 3.500 1 Z" transform="rotate(288)"/><circle r="3.500" stroke="none"/></g>
<!-- pie -->
<path d="M1277.500 1044 A19.500 19.500 0 0 0 1311.300 1057.500 L1311.300 1055.500 L1297 1042 Z" fill="#4e7db8"/>
<path d="M1297 1042 L1311.300 1055.300 A19.500 19.500 0 0 1 1277.500 1042 Z" fill="#6c9bd2"/>
<path d="M1298 1042 L1298 1022.500 A19.500 19.500 0 0 1 1312.300 1055.300 Z" fill="#6ecf9c"/>
<path d="M1296 1040.500 L1277 1040.500 A19 19 0 0 1 1296 1021.500 Z" fill="#c26062"/>
<path d="M1296 1040.500 L1277 1040.500 L1277 1041.500 L1297 1041.500 L1297 1022 L1296 1022 Z" fill="#9a4a4c"/>
<!-- P -->
<rect x="1334" y="1026" width="35" height="34" fill="#000"/>
<circle cx="1351.500" cy="1043" r="15.500" fill="#fff"/>
<path d="M1349 1026 H1369.500 V1036 Q1367 1045.500 1349 1045.500 Z" fill="#000"/>
<path d="M1349 1029 H1354 A6.500 6.500 0 0 1 1354 1042 H1349 Z" fill="#fff"/>
<rect x="1344" y="1026" width="5" height="34" fill="#000"/>
</svg>
<div class="a b" style="left:0px;top:0px;width:406px;height:112px;"></div>
<div class="a" style="left:0px;top:0px;width:406px;height:1px;background:#fff"></div>
<div class="a" style="left:0px;top:0px;width:1px;height:112px;background:#fff"></div>
<div class="a" style="left:0px;top:111px;width:406px;height:1px;background:#000"></div>
<div class="a" style="left:405px;top:0px;width:1px;height:112px;background:#000"></div>
<div class="a" style="left:3px;top:23px;width:400px;height:1px;background:#000"></div>
<div class="a" style="left:3px;top:23px;width:1px;height:88px;background:#000"></div>
<div class="a dw" style="left:4px;top:24px;width:398px;height:86px;"></div>
<div class="a" style="left:4px;top:110px;width:399px;height:1px;background:#fff"></div>
<div class="a" style="left:402px;top:24px;width:1px;height:87px;background:#fff"></div>
<div class="a" style="left:382px;top:1px;width:1px;height:22px;background:#000"></div>
<div class="a" style="left:383px;top:1px;width:1px;height:22px;background:#fff"></div>
<div class="a" style="left:387px;top:5px;width:11px;height:10px;border:1px solid #000;background:#aaa"></div>
<div class="a" style="left:391px;top:9px;width:11px;height:10px;border:1px solid #000;background:#fff"></div>
<div class="a t" style="left:4px;top:5px;">ERROR:</div>
<div class="a dn" style="left:16px;top:38px;width:373px;height:27px;"></div>
<div class="a t" style="left:16px;width:373px;text-align:center;top:45px;">no exelock, cant set directory</div>
<div class="a up" style="left:183px;top:78px;width:40px;height:18px;"></div>
<div class="a t" style="left:182px;width:40px;text-align:center;top:80px;">OK</div>
<svg style="left:202px;top:82px" width="14" height="14"><path d="M1 1 L9 4.500 L6 6 L11 11 L10 12 L5 7 L3.500 10 Z" fill="#dd2222" stroke="#551111" stroke-width="0.700"/><path d="M2 2 L5 3.500" stroke="#ffcccc" stroke-width="0.800"/></svg>
</div>
</body></html>
